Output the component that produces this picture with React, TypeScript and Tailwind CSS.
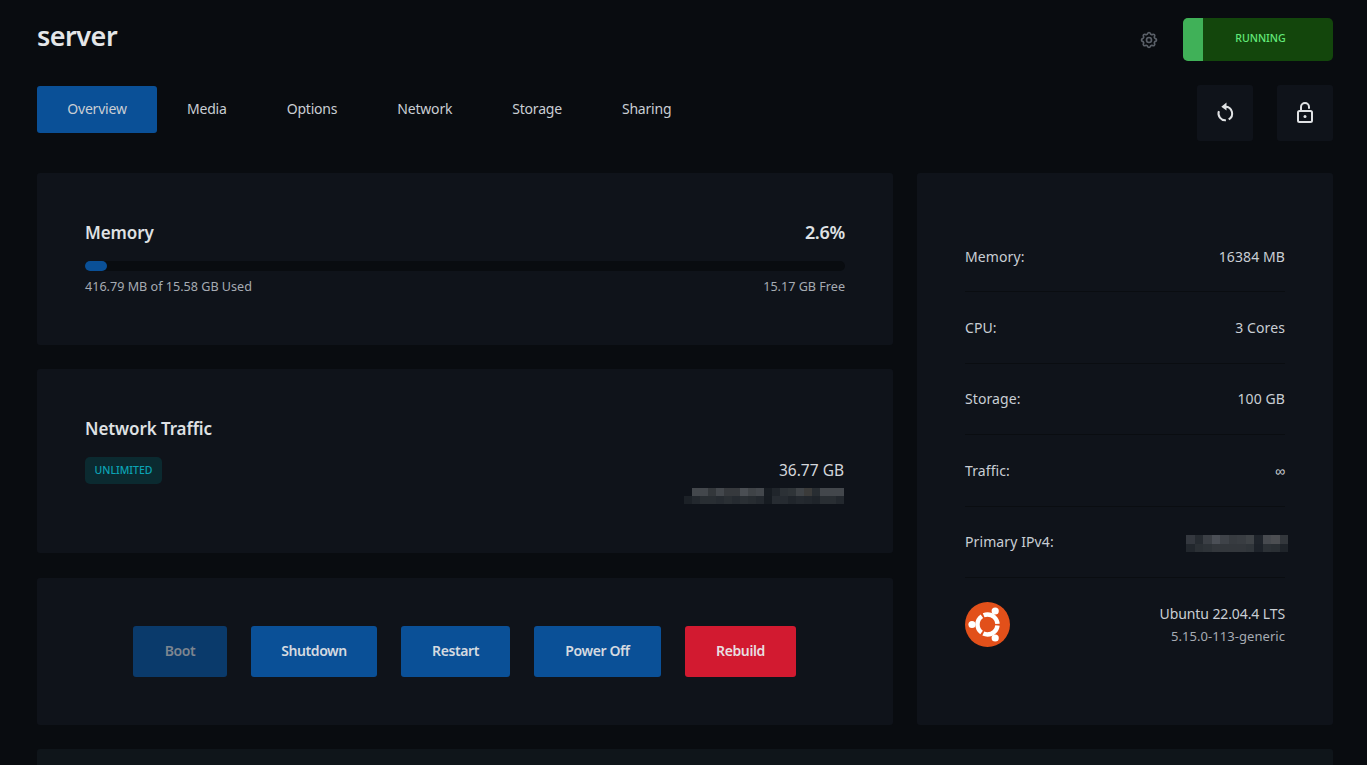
import React from "react";
import { TbSettings } from "react-icons/tb";

const font = "font-['Noto_Sans',sans-serif]";

function Pixels({ rows, cell = 8 }: { rows: string[][]; cell?: number }) {
  const w = Math.max(...rows.map((r) => r.length)) * cell;
  return (
    <svg width={w} height={rows.length * cell} shapeRendering="crispEdges" className="block">
      {rows.map((r, y) =>
        r.map((c, x) => (c ? <rect key={x + "-" + y} x={x * cell} y={y * cell} width={cell} height={cell} fill={c} /> : null))
      )}
    </svg>
  );
}

const trafficRows = [
  ["", "#43474c", "#43474c", "#33373b", "#43474c", "#36393d", "#36393d", "#4a4e53", "#3f4347", "#43474c", "#171c22", "#20252b", "#2c3136", "#2f3438", "#3f4347", "#3b3b3a", "#282d32", "#43474c", "#43474c", "#43474c"],
  ["#1c2127", "#23282e", "#292e33", "#292e33", "#262b31", "#2a2f34", "#262b31", "#2a2f34", "#272c31", "#23282e", "#161b21", "#272c32", "#262b31", "#20252b", "#24292f", "#22272d", "#1f242a", "#292e33", "#292e33", "#23282e"],
];
const ipRows = [
  ["#34383f", "#262b31", "#3b3f45", "#4b4f56", "#3f4349", "#373b40", "#393d42", "#3f4347", "#1f242b", "#474a4f", "#4c4e52", "#33373c"],
  ["#22272d", "#2b3035", "#2e3338", "#33373c", "#33373c", "#33373c", "#33373c", "#30353a", "#1d2229", "#2c3136", "#2a2f34", "#1f242a"],
];

function Row({ label, value }: { label: string; value: React.ReactNode }) {
  return (
    <div className="flex h-[71.4px] items-center justify-between border-b border-[#0a0d11] text-[14px] tracking-[0.1px] text-[#c9ced4]">
      <span>{label}</span>
      <span className="flex">{value}</span>
    </div>
  );
}

function Btn({ children, w, cls }: { children: React.ReactNode; w: string; cls: string }) {
  return <button className={`h-[51px] rounded-[3px] pb-[2px] text-[14px] font-semibold tracking-[-0.4px] ${w} ${cls}`}>{children}</button>;
}

export default function App() {
  return (
    <div className={`h-[765px] overflow-hidden bg-[#090c10] pl-[37px] pr-[34px] pt-[18px] ${font}`}>
      <div className="flex h-[43px] items-start justify-between">
        <h1 className="text-[27px] leading-[36px] font-semibold tracking-[-0.5px] text-[#e4e6e8]">server</h1>
        <div className="flex items-center gap-[24px]">
          <TbSettings size={20} className="text-[#5a6068]" />
          <div className="flex h-[43px] w-[150px] overflow-hidden rounded-[5px] bg-[#13460c]">
            <div className="w-[20px] bg-[#40b158]" />
            <div className="flex flex-1 items-center justify-center pb-px pr-[15px] text-[10.6px] font-medium tracking-[-0.05px] text-[#62e878]">RUNNING</div>
          </div>
        </div>
      </div>

      <div className="mt-[25px] flex items-start justify-between">
        <div className="flex items-center text-[14px] tracking-[-0.2px] text-[#c9ced4]">
          <div className="flex h-[47px] w-[120px] items-center justify-center rounded-[3px] bg-[#0a5097] pb-[2px]">Overview</div>
          <div className="flex h-[47px] items-center px-[30px] pb-[2px]">Media</div>
          <div className="flex h-[47px] items-center px-[30px] pb-[2px]">Options</div>
          <div className="flex h-[47px] items-center px-[30px] pb-[2px]">Network</div>
          <div className="flex h-[47px] items-center px-[30px] pb-[2px]">Storage</div>
          <div className="flex h-[47px] items-center px-[30px] pb-[2px]">Sharing</div>
        </div>
        <div className="-mt-px flex gap-[24px]">
          <div className="flex h-[56px] w-[56px] items-center justify-center rounded-[3px] bg-[#0f131a]">
            <svg width="24" height="24" viewBox="0 0 24 24" fill="none" stroke="#e0e2e4" strokeWidth="2">
              <path d="M12.3 5.7A6.8 6.8 0 0 1 15.7 18.4" />
              <path d="M12.9 19.3A6.8 6.8 0 0 1 5.9 10.2" />
              <path d="M13.5 1.500L8.300 5.700L13.5 9.500Z" fill="#e0e2e4" stroke="none" />
            </svg>
          </div>
          <div className="flex h-[56px] w-[56px] items-center justify-center rounded-[3px] bg-[#0f131a]">
            <svg width="24" height="24" viewBox="0 0 24 24" fill="none" stroke="#e0e2e4" strokeWidth="2" strokeLinecap="round" strokeLinejoin="round">
              <rect x="5" y="10" width="14" height="11" rx="1.500" />
              <circle cx="12" cy="15.500" r="1.500" fill="#e0e2e4" stroke="none" />
              <path d="M8 10V6a4 4 0 0 1 8 0v1" />
            </svg>
          </div>
        </div>
      </div>

      <div className="mt-[32px] flex gap-[24px]">
        <div className="flex w-[856px] flex-col gap-[24px]">
          <section className="h-[172px] rounded-[3px] bg-[#0f131a] px-[48px] pt-[46px]">
            <div className="flex h-[26px] items-start justify-between text-[#dfe1e4]">
              <h2 className="pt-px text-[17px] leading-[26px] font-semibold tracking-[-0.1px]">Memory</h2>
              <span className="text-[18px] leading-[26px] font-semibold tracking-[-0.3px]">2.6%</span>
            </div>
            <div className="mt-[16px] h-[10px] rounded-full bg-[#090c10]">
              <div className="h-[10px] w-[22px] rounded-full bg-[#0a5097]" />
            </div>
            <div className="mt-[7px] flex justify-between text-[12.6px] leading-[18px] text-[#a6abb2]">
              <span>416.79 MB of 15.58 GB Used</span>
              <span>15.17 GB Free</span>
            </div>
          </section>

          <section className="h-[184px] rounded-[3px] bg-[#0f131a] px-[48px] pt-[47px]">
            <h2 className="text-[17px] leading-[26px] font-semibold tracking-[-0.1px] text-[#dfe1e4]">Network Traffic</h2>
            <div className="mt-[15px] flex items-start justify-between">
              <span className="flex h-[27px] w-[77px] items-center justify-center rounded-[5px] bg-[#0b2a30] text-[10.5px] font-medium text-[#0ba3b5]">UNLIMITED</span>
              <div className="flex flex-col items-end pr-px pt-px">
                <span className="text-[15.5px] leading-[24px] text-[#d3d6da]">36.77 GB</span>
                <div className="mt-[6px]">
                  <Pixels rows={trafficRows} />
                </div>
              </div>
            </div>
          </section>

          <section className="mt-px flex h-[147px] items-center justify-center gap-[24px] rounded-[3px] bg-[#0f131a] pr-px">
            <Btn w="w-[94px]" cls="bg-[#0a3a6b] text-[#7d8590]">Boot</Btn>
            <Btn w="w-[126px]" cls="bg-[#0a5097] text-[#d5dae0]">Shutdown</Btn>
            <Btn w="w-[109px]" cls="bg-[#0a5097] text-[#d5dae0]">Restart</Btn>
            <Btn w="w-[127px]" cls="bg-[#0a5097] text-[#d5dae0]">Power Off</Btn>
            <Btn w="w-[111px]" cls="bg-[#d21a30] text-[#e8dfe0]">Rebuild</Btn>
          </section>
        </div>

        <aside className="h-[552px] w-[416px] rounded-[3px] bg-[#0f131a] pl-[48px] pr-[48px] pt-[48px]">
          <Row label="Memory:" value="16384 MB" />
          <Row label="CPU:" value="3 Cores" />
          <Row label="Storage:" value="100 GB" />
          <Row label="Traffic:" value="∞" />
          <Row
            label="Primary IPv4:"
            value={
              <span className="-mr-[3px] mt-[4px] block">
                <Pixels rows={ipRows} cell={8.5} />
              </span>
            }
          />
          <div className="flex h-[94px] items-center justify-between">
            <svg width="45" height="45" viewBox="0 0 45 45">
              <circle cx="22.500" cy="22.500" r="22.500" fill="#e2501a" />
              <circle cx="22.500" cy="22.500" r="10" fill="none" stroke="#fff" strokeWidth="4.400" strokeDasharray="18.940 2" strokeDashoffset="-1" />
              <circle cx="7" cy="22.500" r="3.600" fill="#fff" />
              <circle cx="30.200" cy="9" r="3.600" fill="#fff" />
              <circle cx="30.200" cy="36" r="3.600" fill="#fff" />
            </svg>
            <div className="text-right">
              <div className="text-[14px] leading-[22px] tracking-[-0.1px] text-[#c9ced4]">Ubuntu 22.04.4 LTS</div>
              <div className="text-[13px] leading-[22px] tracking-[0.05px] text-[#a6abb2]">5.15.0-113-generic</div>
            </div>
          </div>
        </aside>
      </div>

      <div className="mt-[24px] h-[40px] rounded-[3px] bg-[#0f151a]" />
    </div>
  );
}
